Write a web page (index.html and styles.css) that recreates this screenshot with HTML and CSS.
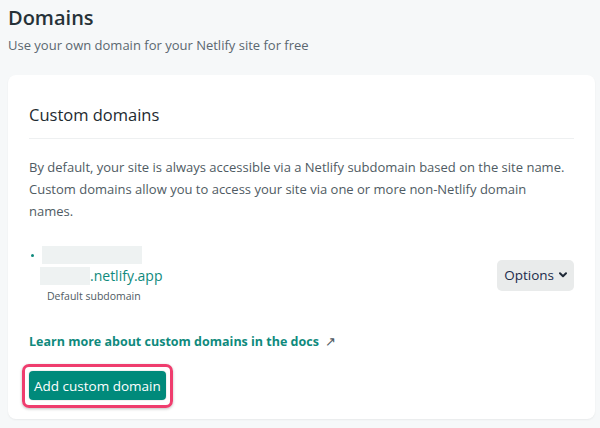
FILE: index.html
```html
<!DOCTYPE html>
<html>
<head>
<meta charset="utf-8">
<link rel="stylesheet" href="styles.css">
</head>
<body>
<header class="page-head">
  <h1 class="title">Domains</h1>
  <p class="subtitle">Use your own domain for your Netlify site for free</p>
</header>
<section class="card">
  <h2 class="card-title">Custom domains</h2>
  <p class="desc">By default, your site is always accessible via a Netlify subdomain based on the site name. Custom domains allow you to access your site via one or more non-Netlify domain names.</p>
  <div class="domain-row">
    <div class="domain-info">
      <div class="domain-line1"><span class="dot"></span><span class="blur blur-wide"></span></div>
      <div class="domain-line2"><span class="blur blur-short"></span><span class="domain-suffix">.netlify.app</span></div>
      <div class="domain-note">Default subdomain</div>
    </div>
    <button class="options">Options <svg class="chev" width="8" height="6" viewBox="0 0 8 6"><path d="M1 1.2 L4 4.2 L7 1.2" fill="none" stroke="#1f2937" stroke-width="2" stroke-linecap="round" stroke-linejoin="round"/></svg></button>
  </div>
  <a class="docs-link" href="#">Learn more about custom domains in the docs <span class="ext">↗</span></a>
  <div class="btn-wrap"><button class="primary">Add custom domain</button></div>
</section>
</body>
</html>
```
FILE: styles.css
```css
html, body { margin: 0; padding: 0; }
body {
  background: #f6f8f9;
  font-family: "Open Sans", "Noto Sans", sans-serif;
  color: #2d3b41;
  width: 600px;
  height: 428px;
  overflow: hidden;
}
.page-head { padding: 4px 8px 0 8px; }
.title {
  margin: 0;
  font-size: 20px;
  font-weight: 600;
  line-height: 28px;
  color: #263238;
}
.subtitle {
  margin: 3px 0 0 0;
  font-size: 13px;
  line-height: 20px;
  color: #5b6770;
}
.card {
  margin: 20px 5px 0 8px;
  background: #fff;
  border-radius: 8px;
  padding: 28px 21px 11px 21px;
  box-shadow: 0 1px 2px rgba(0,0,0,0.06);
}
.card-title {
  margin: 0;
  font-size: 16.5px;
  font-weight: 500;
  line-height: 24px;
  color: #1e2a30;
  padding-bottom: 11px;
  border-bottom: 1px solid #eef0f1;
}
.desc {
  margin: 17px 0 0 0;
  max-width: 542px;
  font-size: 13px;
  line-height: 22px;
  color: #4f5b63;
}
.domain-row {
  margin-top: 24px;
  display: flex;
  align-items: center;
  justify-content: space-between;
}
.domain-info { display: flex; flex-direction: column; }
.domain-line1 { display: flex; align-items: center; height: 18px; }
.dot { width: 3px; height: 3px; background: #0f8a7d; border-radius: 50%; margin: 0 8px 0 2px; }
.blur { display: inline-block; background: #eef2f2; }
.blur-wide { width: 100px; height: 18px; }
.domain-line2 { display: flex; align-items: center; margin: 2px 0 0 11px; height: 20px; }
.blur-short { width: 50px; height: 18px; }
.domain-suffix { font-size: 14px; color: #0f8a7d; line-height: 20px; }
.domain-note { margin: 2px 0 0 18px; font-size: 10.5px; color: #4f5b63; line-height: 16px; }
.options {
  font-family: inherit;
  border: 0;
  background: #e9ebeb;
  border-radius: 5px;
  height: 31px;
  padding: 0 7px 0 7px;
  font-size: 13.5px;
  color: #1a2a4a;
  display: flex;
  align-items: center;
  gap: 5px;
}
.docs-link {
  display: block;
  width: fit-content;
  margin-top: 29px;
  font-size: 12.5px;
  font-weight: 700;
  color: #0f8a7d;
  text-decoration: none;
  line-height: 18px;
}
.ext { font-weight: 400; color: #4f5b63; margin-left: 3px; }
.btn-wrap {
  margin-top: 13px;
  margin-left: -7px;
  width: fit-content;
  border: 3px solid #ef3d6e;
  border-radius: 7px;
  padding: 4px 4px 5px 4px;
  box-shadow: 0 1px 3px rgba(0,0,0,0.25);
}
.primary {
  display: block;
  font-family: inherit;
  border: 0;
  background: #008a7b;
  color: #fff;
  font-size: 13.5px;
  border-radius: 4px;
  height: 29px;
  padding: 0 5px;
  box-shadow: 0 0 0 1px rgba(0,0,0,0.05);
}
```
